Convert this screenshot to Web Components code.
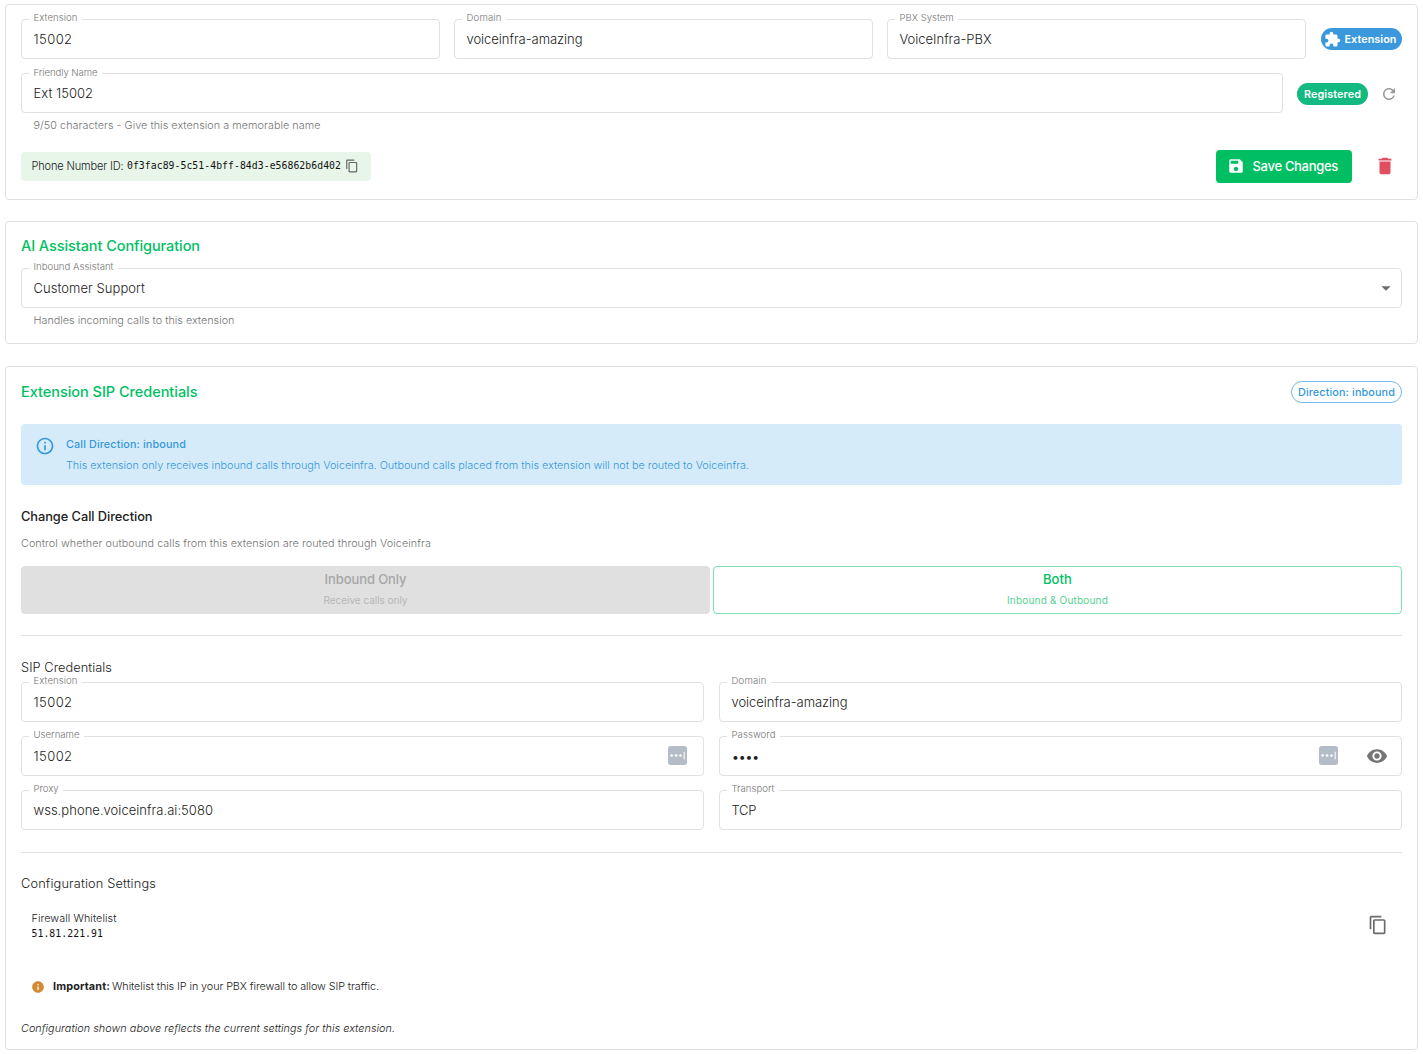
<!DOCTYPE html>
<html lang="en">
<head>
<meta charset="utf-8">
<title>Extension settings</title>
<style>
  body {
    margin: 0;
    padding: 4px 5px;
    background: #fff;
    color: #212121;
    font-family: Inter, "Open Sans", sans-serif;
    font-weight: 350;
    --green: #00bf63;
    --blue: #3498db;
    --line: #e0e0e0;
    --muted: #757575;
  }
</style>
</head>
<body>
<extension-page></extension-page>

<script>
const ICONS = {
  puzzle: '<path d="M20.5 11H19V7c0-1.1-.9-2-2-2h-4V3.5a2.5 2.5 0 0 0-5 0V5H4c-1.1 0-1.99.9-1.99 2v3.8H3.5a2.7 2.7 0 0 1 0 5.4H2V20c0 1.1.9 2 2 2h3.8v-1.5a2.7 2.7 0 0 1 5.4 0V22H17c1.1 0 2-.9 2-2v-4h1.5a2.5 2.5 0 0 0 0-5z"/>',
  refresh: '<path d="M17.65 6.35C16.2 4.9 14.21 4 12 4c-4.42 0-7.99 3.58-7.99 8s3.57 8 7.99 8c3.73 0 6.84-2.55 7.73-6h-2.08c-.82 2.33-3.04 4-5.65 4-3.31 0-6-2.69-6-6s2.69-6 6-6c1.66 0 3.14.69 4.22 1.78L13 11h7V4l-2.35 2.35z"/>',
  save: '<path d="M17 3H5c-1.11 0-2 .9-2 2v14c0 1.1.89 2 2 2h14c1.1 0 2-.9 2-2V7l-4-4zm-5 16c-1.66 0-3-1.34-3-3s1.34-3 3-3 3 1.34 3 3-1.34 3-3 3zm3-10H5V5h10v4z"/>',
  trash: '<path d="M6 19c0 1.1.9 2 2 2h8c1.1 0 2-.9 2-2V7H6v12zM19 4h-3.5l-1-1h-5l-1 1H5v2h14V4z"/>',
  copy: '<path d="M16 1H4c-1.1 0-2 .9-2 2v14h2V3h12V1zm3 4H8c-1.1 0-2 .9-2 2v14c0 1.1.9 2 2 2h11c1.1 0 2-.9 2-2V7c0-1.1-.9-2-2-2zm0 16H8V7h11v14z"/>',
  arrow: '<path d="M7 10l5 5 5-5z"/>',
  infoOutline: '<path d="M11 7h2v2h-2zm0 4h2v6h-2zm1-9C6.48 2 2 6.48 2 12s4.48 10 10 10 10-4.48 10-10S17.52 2 12 2zm0 18c-4.41 0-8-3.59-8-8s3.59-8 8-8 8 3.59 8 8-3.59 8-8 8z"/>',
  info: '<path d="M12 2C6.48 2 2 6.48 2 12s4.48 10 10 10 10-4.48 10-10S17.52 2 12 2zm1 15h-2v-6h2v6zm0-8h-2V7h2v2z"/>',
  eye: '<path d="M12 4.5C7 4.5 2.73 7.61 1 12c1.73 4.39 6 7.5 11 7.5s9.27-3.11 11-7.5c-1.73-4.39-6-7.5-11-7.5zM12 17c-2.76 0-5-2.24-5-5s2.24-5 5-5 5 2.24 5 5-2.24 5-5 5zm0-8c-1.66 0-3 1.34-3 3s1.34 3 3 3 3-1.34 3-3-1.34-3-3-3z"/>',
  keeper: '<rect width="24" height="24" rx="3.5" fill="#b4bcc8"/><g fill="#fff"><circle cx="4.6" cy="12" r="1.7"/><circle cx="10.2" cy="12" r="1.7"/><circle cx="15.8" cy="12" r="1.7"/><rect x="19.8" y="7.2" width="1.3" height="9.6"/></g>'
};

class UiIcon extends HTMLElement {
  constructor() {
    super();
    this.attachShadow({ mode: 'open' });
  }

  connectedCallback() {
    const size = this.getAttribute('size') || 20;
    this.shadowRoot.innerHTML = `
      <style>
        :host { display: block; flex: none; width: ${size}px; height: ${size}px; }
        svg { display: block; width: 100%; height: 100%; fill: currentColor; }
      </style>
      <svg viewBox="0 0 24 24">${ICONS[this.getAttribute('name')]}</svg>`;
  }
}
customElements.define('ui-icon', UiIcon);

// One line of text. "fit" is the width in px that the letter spacing is tuned to.
class UiText extends HTMLElement {
  constructor() {
    super();
    this.attachShadow({ mode: 'open' }).innerHTML = `
      <style>
        :host { display: block; width: fit-content; flex: none; white-space: nowrap; line-height: 20px; }
      </style>
      <slot></slot>`;
  }

  connectedCallback() {
    this.style.fontSize = (this.getAttribute('size') || 13) + 'px';
    const fit = parseFloat(this.getAttribute('fit'));
    if (!fit) return;
    this.style.letterSpacing = '0px';
    const natural = this.getBoundingClientRect().width;
    const count = this.textContent.length;
    this.style.letterSpacing = ((fit - natural) / count).toFixed(3) + 'px';
  }
}

class UiCard extends HTMLElement {
  constructor() {
    super();
    this.attachShadow({ mode: 'open' }).innerHTML = `
      <style>
        :host {
          display: block;
          box-sizing: border-box;
          border: 1px solid var(--line);
          border-radius: 4px;
          padding: 14px 15px;
          background: #fff;
        }
      </style>
      <slot></slot>`;
  }
}
customElements.define('ui-card', UiCard);

// Outlined text field with its label in the border
class UiField extends HTMLElement {
  constructor() {
    super();
    this.attachShadow({ mode: 'open' });
  }

  connectedCallback() {
    const attr = (name) => this.getAttribute(name) || '';
    this.shadowRoot.innerHTML = `
      <style>
        :host { display: block; flex: 1; min-width: 0; }
        .box {
          position: relative;
          box-sizing: border-box;
          height: 40px;
          display: flex;
          align-items: center;
          padding: 0 14px 0 11.5px;
          border: 1px solid var(--line);
          border-radius: 4px;
        }
        .label {
          position: absolute;
          top: var(--label-top, -9px);
          left: 7px;
          padding: 0 4.5px;
          background: #fff;
          color: var(--muted);
        }
        .label ui-text { line-height: 14px; }
        .value { flex: 1; }
        .dots { padding-top: 2px; }
        .helper { margin: 5px 0 0 12.5px; color: var(--muted); }
        .helper ui-text { line-height: 15px; }
      </style>
      <div class="box">
        <div class="label"><ui-text size="9.6" fit="${attr('label-fit')}">${attr('label')}</ui-text></div>
        <div class="value ${attr('dots') ? 'dots' : ''}"><ui-text size="${attr('value-size') || 13}" fit="${attr('fit')}">${attr('value')}</ui-text></div>
        <slot></slot>
      </div>
      ${attr('helper') ? `<div class="helper"><ui-text size="10.8" fit="${attr('helper-fit')}">${attr('helper')}</ui-text></div>` : ''}`;
  }
}

class UiChip extends HTMLElement {
  constructor() {
    super();
    this.attachShadow({ mode: 'open' }).innerHTML = `
      <style>
        :host {
          display: flex;
          flex: none;
          box-sizing: border-box;
          align-items: center;
          justify-content: center;
          height: 22px;
          border-radius: 11px;
          color: #fff;
          font-weight: 600;
        }
        :host([kind="blue"]) { background: #3a99dc; }
        :host([kind="green"]) { background: #12b981; }
        :host([kind="outline"]) { border: 1px solid #78b9e7; color: var(--blue); font-weight: 500; }
        ::slotted(ui-text) { padding-top: 1px; }
        ::slotted(ui-icon) { margin: 0 4px 0 -3px; }
      </style>
      <slot></slot>`;
  }
}
customElements.define('ui-chip', UiChip);

class DirectionButton extends HTMLElement {
  constructor() {
    super();
    this.attachShadow({ mode: 'open' }).innerHTML = `
      <style>
        :host {
          display: flex;
          flex: 1;
          box-sizing: border-box;
          height: 48px;
          flex-direction: column;
          align-items: center;
          padding-top: 2px;
          border: 1px solid rgba(0, 191, 99, .5);
          border-radius: 4px;
          color: var(--green);
          font-weight: 500;
        }
        :host([disabled]) { background: #e0e0e0; border-color: #e0e0e0; color: #a6a6a6; }
        .sub { margin-top: 1px; font-weight: 400; opacity: .7; }
      </style>
      <slot></slot>
      <div class="sub"><slot name="sub"></slot></div>`;
  }
}
customElements.define('direction-button', DirectionButton);

class UiAlert extends HTMLElement {
  constructor() {
    super();
    this.attachShadow({ mode: 'open' }).innerHTML = `
      <style>
        :host {
          display: flex;
          box-sizing: border-box;
          height: 61px;
          gap: 11px;
          padding: 11px 14px;
          border-radius: 4px;
          background: #d6ebfa;
          color: var(--blue);
        }
        ui-icon { margin-top: 1px; }
        .title { font-weight: 550; margin-bottom: 1px; }
      </style>
      <ui-icon name="infoOutline" size="20"></ui-icon>
      <div>
        <div class="title"><slot name="title"></slot></div>
        <slot></slot>
      </div>`;
  }
}
customElements.define('ui-alert', UiAlert);

class ExtensionPage extends HTMLElement {
  constructor() {
    super();
    this.attachShadow({ mode: 'open' }).innerHTML = `
      <style>
        :host { display: block; }
        .row { display: flex; align-items: center; gap: 14px; }
        .identity { height: 196px; margin-bottom: 21px; }
        .assistant { height: 123px; margin-bottom: 22px; }
        .credentials { height: 684px; }
        .name { margin-top: 14px; align-items: flex-start; --label-top: -8px; }
        .status { display: flex; align-items: center; gap: 12px; height: 42px; padding-right: 4px; color: #9a9a9a; }
        .footer { margin-top: 17px; height: 33px; gap: 0; }
        .phone-id {
          display: flex;
          box-sizing: border-box;
          align-items: center;
          width: 350px;
          height: 29px;
          padding: 0 12px 1px 10.5px;
          border-radius: 4px;
          background: #e8f5e9;
        }
        .mono { font-family: "DejaVu Sans Mono", monospace; font-weight: 400; color: #111; }
        .phone-id .mono { margin-left: 3.5px; }
        .phone-id ui-icon { margin-left: 4px; color: #666; }
        .save {
          display: flex;
          box-sizing: border-box;
          align-items: center;
          width: 136px;
          height: 33px;
          margin-left: auto;
          padding: 0 0 1px 11px;
          gap: 7.5px;
          border: 0;
          border-radius: 4px;
          background: var(--green);
          color: #fff;
          font: inherit;
          font-weight: 500;
        }
        .trash { margin: 0 6px 1px 22px; color: #e04f5f; }
        h2 { margin: 0; font-weight: 550; color: var(--green); }
        .assistant h2 { margin: 0 0 12px; }
        .arrow { color: #6b6b6b; margin-right: -9.5px; }
        .head { justify-content: space-between; height: 22px; margin-bottom: 21px; }
        h3 { margin: 22px 0 0; font-weight: 550; }
        .note { margin: 7px 0 12px; color: var(--muted); }
        .directions { display: flex; gap: 3px; }
        hr { margin: 21px 0; border: 0; border-top: 1px solid var(--line); }
        .fields {
          display: grid;
          grid-template-columns: 1fr 1fr;
          gap: 14px 15px;
          margin-top: 4px;
        }
        .eye { color: #757575; margin: 0 -1px 0 28.5px; }
        .firewall { display: flex; justify-content: space-between; padding: 0 14px 0 10.5px; margin-top: 17px; }
        .firewall ui-text { line-height: 15px; }
        .firewall ui-icon { margin-top: 4px; color: #6b6b6b; }
        .important { display: flex; align-items: center; padding-left: 10px; margin-top: 36px; }
        .important ui-icon { margin-right: 8px; color: #d18b35; }
        .important .strong { font-weight: 700; margin-right: 2px; }
        .last { margin-top: 22px; font-style: italic; }
      </style>

      <ui-card class="identity">
        <div class="row">
          <ui-field label="Extension" label-fit="44" value="15002" fit="39"></ui-field>
          <ui-field label="Domain" label-fit="35" value="voiceinfra-amazing" fit="116"></ui-field>
          <ui-field label="PBX System" label-fit="54" value="VoiceInfra-PBX" fit="92"></ui-field>
          <ui-chip kind="blue" style="width: 81px; margin-left: 1px">
            <ui-icon name="puzzle" size="17"></ui-icon><ui-text size="10.8" fit="52">Extension</ui-text>
          </ui-chip>
        </div>
        <div class="row name">
          <ui-field label="Friendly Name" label-fit="64" value="Ext 15002" fit="59.5" helper="9/50 characters - Give this extension a memorable name" helper-fit="287"></ui-field>
          <div class="status">
            <ui-chip kind="green" style="width: 71px"><ui-text size="10.8" fit="57">Registered</ui-text></ui-chip>
            <ui-icon name="refresh" size="18"></ui-icon>
          </div>
        </div>
        <div class="row footer">
          <div class="phone-id">
            <ui-text size="11" fit="92">Phone Number ID:</ui-text>
            <ui-text class="mono" size="9.8" fit="214">0f3fac89-5c51-4bff-84d3-e56862b6d402</ui-text>
            <ui-icon name="copy" size="14"></ui-icon>
          </div>
          <button class="save"><ui-icon name="save" size="18"></ui-icon><ui-text size="13" fit="85.5">Save Changes</ui-text></button>
          <ui-icon class="trash" name="trash" size="22"></ui-icon>
        </div>
      </ui-card>

      <ui-card class="assistant">
        <h2><ui-text size="14.5" fit="179">AI Assistant Configuration</ui-text></h2>
        <ui-field label="Inbound Assistant" label-fit="80" value="Customer Support" fit="111.5" helper="Handles incoming calls to this extension" helper-fit="201">
          <ui-icon class="arrow" name="arrow" size="22"></ui-icon>
        </ui-field>
      </ui-card>

      <ui-card class="credentials">
        <div class="row head">
          <h2><ui-text size="14.5" fit="176.5">Extension SIP Credentials</ui-text></h2>
          <ui-chip kind="outline" style="width: 111px"><ui-text size="10.8" fit="97">Direction: inbound</ui-text></ui-chip>
        </div>
        <ui-alert>
          <ui-text slot="title" size="10.8" fit="120">Call Direction: inbound</ui-text>
          <ui-text size="10.8" fit="683">This extension only receives inbound calls through Voiceinfra. Outbound calls placed from this extension will not be routed to Voiceinfra.</ui-text>
        </ui-alert>
        <h3><ui-text size="12.8" fit="131.5">Change Call Direction</ui-text></h3>
        <div class="note"><ui-text size="10.8" fit="410">Control whether outbound calls from this extension are routed through Voiceinfra</ui-text></div>
        <div class="directions">
          <direction-button disabled>
            <ui-text size="13" fit="82">Inbound Only</ui-text>
            <ui-text slot="sub" size="10" fit="84">Receive calls only</ui-text>
          </direction-button>
          <direction-button>
            <ui-text size="13" fit="29">Both</ui-text>
            <ui-text slot="sub" size="10" fit="101">Inbound &amp; Outbound</ui-text>
          </direction-button>
        </div>
        <hr style="margin-bottom: 22px">
        <ui-text size="12.8" fit="91">SIP Credentials</ui-text>
        <div class="fields">
          <ui-field label="Extension" label-fit="44" value="15002" fit="39"></ui-field>
          <ui-field label="Domain" label-fit="35" value="voiceinfra-amazing" fit="116"></ui-field>
          <ui-field label="Username" label-fit="46" value="15002" fit="39">
            <ui-icon name="keeper" size="19" style="margin: 0 2.5px 1px 0"></ui-icon>
          </ui-field>
          <ui-field label="Password" label-fit="44" value="••••" value-size="14" fit="27" dots="1">
            <ui-icon name="keeper" size="19" style="margin-bottom: 1px"></ui-icon>
            <ui-icon class="eye" name="eye" size="22"></ui-icon>
          </ui-field>
          <ui-field label="Proxy" label-fit="25" value="wss.phone.voiceinfra.ai:5080" fit="179.5"></ui-field>
          <ui-field label="Transport" label-fit="43" value="TCP" fit="24.5"></ui-field>
        </div>
        <hr style="margin-top: 22px">
        <ui-text size="12.8" fit="135">Configuration Settings</ui-text>
        <div class="firewall">
          <div>
            <ui-text size="10.8" fit="85">Firewall Whitelist</ui-text>
            <ui-text class="mono" size="9.8" fit="71.5">51.81.221.91</ui-text>
          </div>
          <ui-icon name="copy" size="20"></ui-icon>
        </div>
        <div class="important">
          <ui-icon name="info" size="14"></ui-icon>
          <ui-text class="strong" size="10.8" fit="57">Important:</ui-text>
          <ui-text size="10.8" fit="267">Whitelist this IP in your PBX firewall to allow SIP traffic.</ui-text>
        </div>
        <div class="last"><ui-text size="10.8" fit="374">Configuration shown above reflects the current settings for this extension.</ui-text></div>
      </ui-card>`;
  }
}
customElements.define('ui-field', UiField);
customElements.define('extension-page', ExtensionPage);
// last, so that every line is measured with its final styles
customElements.define('ui-text', UiText);
</script>
</body>
</html>
